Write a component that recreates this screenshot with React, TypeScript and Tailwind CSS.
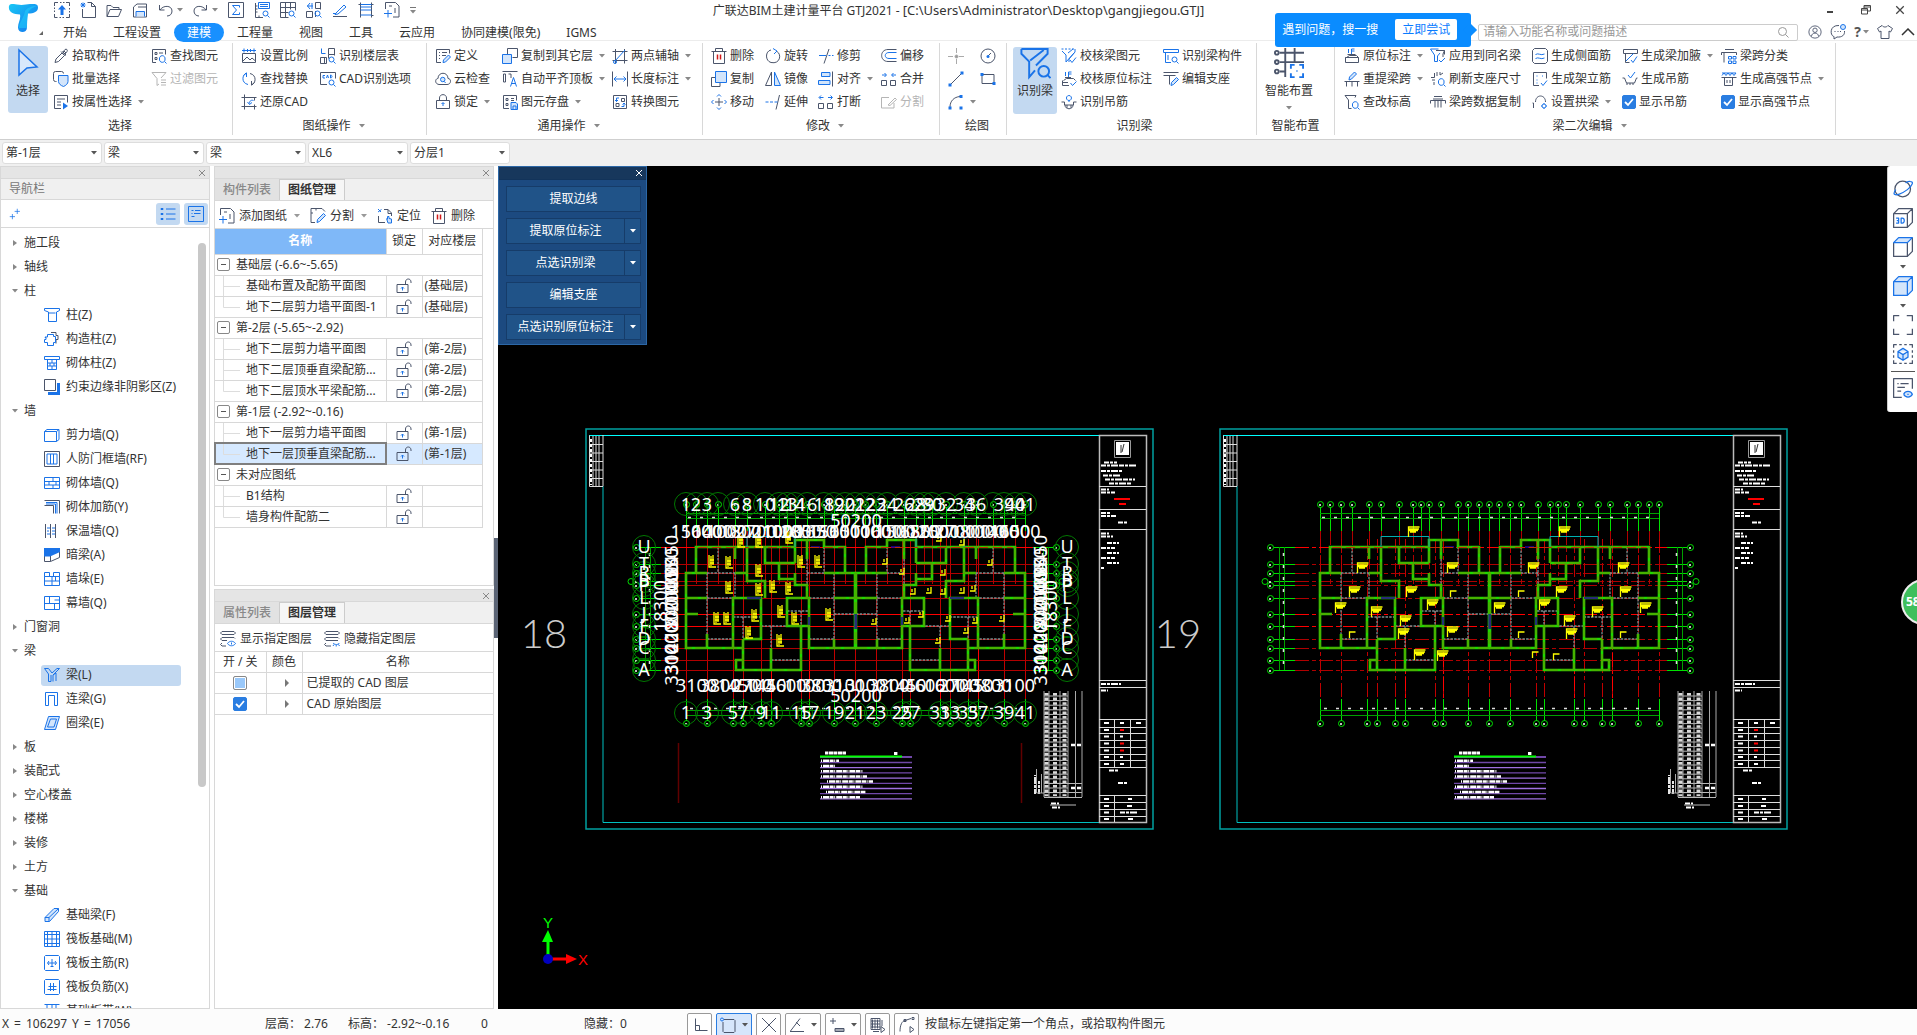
import React from 'react';

type Glyph = { d?: string; b?: string; f?: string; r?: string; s?: string };

// d: dark strokes, b: blue strokes, f: blue strokes with a light fill, r: red strokes, s: solid blue
const GLYPHS: Record<string, Glyph> = {
  up: { d: 'M.5 4V.5H4M6 .5h1.500M9 .5h1.500M12 .5h3.500V4M15.500 6v1.500M15.500 9v1.500M15.500 12v3.500H12M10 15.500H8.500M7 15.500H5.500M3.500 15.500H.5V12M.5 10V8.500M.5 7V5.500', s: 'M8 3l4 4.500H9.500V13h-3V7.500H4z' },
  newdoc: { d: 'M7.500 .5h4l4 4v11H2.500V7M11.500 .5v4h4', b: 'M1 1l4 4M5 1L1 5M3 .5v5M.5 3h5' },
  open: { d: 'M1 14.500V3.500h4l2 2h6v2M1 14.500h11.500l3-7H4z' },
  save: { d: 'M1.500 15V5l3.500-3h9.500v13zM6 5h8', f: 'M4 14.500V9.500h8.500v5' },
  undo: { d: 'M1.500 3v5h5M2 8c3-5 12-5 12 1c0 3-2 5-5 5' },
  redo: { d: 'M13.500 3v5h-5M13 8C10 3 1 3 1 9c0 3 2 5 5 5' },
  sigma: { d: 'M.5 .5h15v15H.5z', b: 'M11.500 5.500v-2h-7L8.500 8l-4 4.500h7v-2' },
  rulerfind: { d: 'M1.500 1v14.500H9M1.500 4h2M1.500 7h2M1.500 10h2M5 15.500v-2', b: 'M4.500 .5h11v6h-11zM6 2.500h8M6 4.500h8M15.500 15.500l-2-2M14 11.500a2.500 2.500 0 1 1-5 0a2.500 2.500 0 1 1 5 0' },
  gridfind: { d: 'M.5 .5h15v8M.5 .5v15h8M.5 5.500h15M.5 10.500h8M5.500 .5v15M10.500 .5v7', b: 'M15.500 15.500l-2-2M14 11.500a2.500 2.500 0 1 1-5 0a2.500 2.500 0 1 1 5 0' },
  gridmark: { d: 'M9.500 .5h5v7M9.500 .5v6h5M.5 9.500h6v6h-6zM9.500 9v6', b: 'M1 4h6M4 1L1.500 4L4 7M6 1v6M15.500 15.500l-2-2M14 11.500a2.500 2.500 0 1 1-5 0a2.500 2.500 0 1 1 5 0' },
  sketch: { d: 'M1 14.500h14', b: 'M4 11l8-8l2 2l-8 7l-3 .5zM1 11.500h3' },
  ladder: { d: 'M2.500 .5v15M13.500 .5v15M.5 2.500h2M13.500 2.500h2M13.500 13.500h2', b: 'M2.500 2.500h11M2.500 5h11M2.500 8h11M2.500 13h11' },
  addpage: { d: 'M1.500 7V.5h10l3.500 3.500v11H9M5 4h3M11 6v5', b: 'M4 8v7.500M0 11.500h8' },
  picker: { d: 'M2 14.500l1-3.500l6-6l2.500 2.500l-6 6zM8 3.500l4.500 4.500M10 4l2-2.500c1.500-1 3 .5 2 2L12 6zM9.500 3.500l3.500 3.500M11 3l2 2' },
  batch: { d: 'M3.500 10.500H2.500a2 2 0 0 1-2-2v-6a2 2 0 0 1 2-2h6a2 2 0 0 1 2 2', f: 'M5.500 4.500h9.500v6c0 2-2 4-4.500 5c-3-1-5-3-5-5z' },
  attr: { d: 'M8 14.500H1.500v-13h13v7M4 5h8M4 8h4M4 11h4', s: 'M10 8.500v7l5-3.500z' },
  find: { d: 'M5 14.500H1.500v-13h13v5M4 4.500h2v2H4zM8 5h4M4 9.500h2v2H4z', b: 'M15.500 15.500l-2-2M14 11a2.800 2.800 0 1 1-5.500 0a2.800 2.800 0 1 1 5.500 0' },
  filter: { d: 'M1 1.500h14L10 7M1 1.500L6 7.500v7l2-1.500M10 9h5M10 11.500h5M10 14h5' },
  ratio: { d: 'M1.500 5.500h13v9h-13zM2 13l4-4l3 3l2-2l3.500 3', b: 'M1 2.500h14M3 .5v4M13 .5v4M6.500 1v3M9.500 1v3' },
  replace: { d: 'M9 2.500c7 1.500 6 10 1.500 11.500M13.500 11.500l-3 2.500v-4', b: 'M7 13.500C0 12 1 3.500 5.500 2M2.500 4.500l3-2.500v4' },
  restore: { d: 'M3.500 .5v15M.5 3.500h15M.5 12.500h15M13.500 3.500v3M13.500 10.500v5', b: 'M12.500 6.500c-3-1-4 1-4 3M6.500 8l2 2.500l2.500-2' },
  floor: { d: 'M8.500 .5h6v7M8.500 .5v6h6M.5 9.500h6v6M.5 9.500v6h6M4.500 9.500v6M8.500 6.500v4', b: 'M1.500 .5v5h4M15.500 15.500l-2-2M14 11.500a2.500 2.500 0 1 1-5 0a2.500 2.500 0 1 1 5 0' },
  cad: { d: 'M7 13.500H.5v-12h15v6', b: 'M5 4.500H3v2.500h2M6.500 7l1-3l1 3M10.500 4v3c2 0 2-3 0-3M15.500 15.500l-2-2M14 11.500a2.500 2.500 0 1 1-5 0a2.500 2.500 0 1 1 5 0' },
  define: { d: 'M6 14.500H1.500v-13h13v4M4 4.500h1M7 4.500h5M4 7.500h1M7 7.500h4M4 10.500h1', f: 'M8 14.500l.500-2.500l5-5l2 2l-5 5z' },
  cloud: { d: 'M4 13.500C-.5 13 0 7.500 3 7.500C3 .5 13 .5 13 7.500c3.500 0 3.500 6-1 6z', f: 'M10 8.500a2.200 2.200 0 1 1-4.500 0a2.200 2.200 0 1 1 4.500 0M10.500 12l-1-1.500' },
  lock: { d: 'M4.500 6.500V4c0-4.500 7-4.500 7 0v2.500M1.500 6.500h13v8h-13z', f: 'M8 12V9M6.500 10L8 8.500L9.500 10' },
  unlock: { d: 'M9.500 6.500V4c0-4 5.500-4 5.500 0v1M1 6.500h11v8H1z', f: 'M6.500 12.500V9M5 10.500L6.500 9L8 10.500' },
  copyto: { d: 'M5.500 6V.5h10v9h-5', f: 'M.5 6.500h9v9h-9z' },
  aligntop: { d: 'M.5 .5h15M3.500 3v8H1.500V3zM6.500 3H9v4', b: 'M8.500 15.500l3-9l3 9M9.500 12.500h4' },
  saveset: { d: 'M7 14.500H1.500v-13h13v5M4 4.500h2v2H4zM9 4.500h3M9 6.500h3M4 9.500h2v2H4z', f: 'M9 8.500h5l1.500 1.500v5.500H9zM11 15v-3h3v3' },
  axis: { d: 'M3.500 1v14.500M12.500 1v14.500M.5 3.500h15M.5 12.500h15', b: 'M3 13L13 2M1.500 14a1.500 1.500 0 1 0 3 0a1.500 1.500 0 1 0-3 0' },
  dim: { d: 'M.5 .5v15M15.500 .5v15', b: 'M2 8h12M4.500 5.500L2 8l2.500 2.500M11.500 5.500L14 8l-2.500 2.500' },
  convert: { d: 'M1.500 1.500h13v13h-13zM9.500 4.500h3v3h-3zM4 9.500h3v3H4z', b: 'M7 4H4.500v3.500M3 6l1.500 1.500L6 6M9.500 12.500h2.500V9M10.500 10.500L12 9l1.500 1.500' },
  trash: { d: 'M.5 3.500h15M4.500 3.500v-3h7v3M2.500 3.500v12h11v-12', r: 'M6.500 6.500v5M9.500 6.500v5' },
  rotate: { d: 'M6 2C0 3 0 13 6 14.500c9 2 11-8 6-11', b: 'M8 .5L12 3L9 6' },
  trim: { d: 'M11 1L6 15.500', b: 'M1 7.500h7M10.500 7.500h2M14 7.500h1.500' },
  offset: { d: 'M15.500 1.500H7c-8.500 0-8.500 12 0 12h8.500', b: 'M15.500 4.500H8c-5 0-5 6 0 6h7.500' },
  copy: { d: 'M4 6.500H.5v9H9v-3.500', f: 'M4.500 .5h11v11h-11z' },
  mirror: { d: 'M6.500 1v13.500H.5z', f: 'M9.500 1v13.500h6z' },
  align: { d: 'M14.500 .5v15', f: 'M3.500 1.500H12v4H3.500zM.5 9.500H12v4H.5z' },
  merge: { d: 'M.5 9.500h5v5h-5zM9.500 9.500h5v5h-5z', b: 'M1 4h4M3.500 2L5.500 4L3.500 6M15 4h-4M12.500 2l-2 2l2 2' },
  move: { d: 'M8 4v8M4 8h8', b: 'M6 2.500L8 .5l2 2M6 13.500l2 2l2-2M2.500 6L.5 8l2 2M13.500 6l2 2l-2 2' },
  extend: { d: 'M14.500 1L11 15.500', b: 'M.5 8h3M5 8h3M9.500 8h3' },
  break: { d: 'M.5 9.500h5v5h-5zM9.500 9.500h5v5h-5z', b: 'M5.500 3.500H1.500M3 1.500L1 3.500l2 2M10 3.500h4M12.500 1.500l2 2l-2 2' },
  split: { d: 'M13 9v5H.5V3.500H8M7 11l7-7l1.500 1.500l-6.500 6z' },
  circle: { d: 'M15 8a7 7 0 1 1-14 0a7 7 0 1 1 14 0M8 8l3-3', s: 'M9.500 8.500a1.500 1.500 0 1 1-3 0a1.500 1.500 0 1 1 3 0' },
  line: { d: 'M3 13L13 3', s: 'M.5 12.500h3v3h-3zM12.500 .5h3v3h-3z' },
  rect: { d: 'M2 3.500h12v9H2z', s: 'M.5 2h3v3h-3zM12.500 11h3v3h-3z' },
  arc: { d: 'M2 13C2 7 6 3 12 2.500', s: 'M.5 12.500h3v3h-3zM11.500 1h3v3h-3zM11.500 12.500h3v3h-3z' },
  beamcheck: { b: 'M.5 1h2M4 1h2M7.500 1h2M11 1h2M14 1v3L8 11v3M1 3l4 4v7M5 14l8-9M7 5l5-4M9 12l2 2.500l4-5' },
  stampcheck: { d: 'M4 6.500h6M2.500 9.500l3-2h7l2 2M1.500 9.500v5H8M1.500 11.500H7', b: 'M7.500 6V1M4.500 1v4M7.500 1h3M7.500 3h3M9.500 12l2 2.500l4-4' },
  hook: { d: 'M.5 8h3v3h9V8h3M4 11c0 5 8 5 8 0M6 14v-3M10 14v-3', b: 'M8 1.500a2.500 2.500 0 1 1-.1 0M8 6.500V8' },
  beamcomp: { b: 'M.5 1.500h15v3H.5zM2.500 4.500v10H8M5 7v5M15.500 15.500l-2-2M14 11.500a2.500 2.500 0 1 1-5 0a2.500 2.500 0 1 1 5 0' },
  editsup: { d: 'M.5 1.500h15M.5 4.500h12M6.500 4.500v9', f: 'M8 14.500l.500-3l5-5l2 2l-5 5z' },
  stamp: { d: 'M3.500 6.500h8M2.500 9.500l3-2h7l2 2v5h-13v-5zM1.500 9.500h13', b: 'M7.500 6V1M4.500 1v4M7.500 1h3M7.500 3h3' },
  respan: { d: 'M.5 10.500h15M2.500 10.500v5M8 10.500v5M13.500 10.500v5', f: 'M5 9l.500-3l5-5l2 2l-5 5z' },
  elev: { d: 'M1 1.500h11l-1 2M1 1.500L4.500 6v8.500h3', b: 'M15.500 15.500l-2-2M14 11a2.800 2.800 0 1 1-5.500 0a2.800 2.800 0 1 1 5.500 0' },
  applysame: { d: 'M6 2.500h8.500L13 6v3M14.500 2.500v4', b: 'M.5 1h8M.5 1l4 6v6.500h3V8L10 5M9 12l2 2l4-4' },
  refresh: { d: 'M1 6.500h3.500V2M7 1v4M10 1v3l3-2M2 9h3M4 14v-3', b: 'M15.500 15.500l-2-2M14 11a2.800 2.800 0 1 1-5.500 0a2.800 2.800 0 1 1 5.500 0' },
  spancopy: { d: 'M4 2.500h8M.5 9.500V6.500h15v3M5 6.500v7M8 6.500v7M11 6.500v7M3 5h10' },
  sidebar: { d: 'M2.500 .5h11l2 2v11l-2 2h-11l-2-2v-11z', b: 'M3.500 6.500c3-2 5 1.500 9-.5M3.500 10.500c3-2 5 1.500 9-.5' },
  stand: { d: 'M7 14.500H1.500v-13h13v6', b: 'M4.500 5h1M10 5h1M4.500 9h1M4.500 12h1M9 12l2 2.500l4-5' },
  arch: { d: 'M1.500 14V9H.5M3.500 8c0-8 10-8 10 0', b: 'M14 12a2 2 0 1 1-4 0a2 2 0 1 1 4 0M12 9v1M12 14v1M9 12h1M14 12h1' },
  haunch: { d: 'M1.500 1.500h14v4h-14zM3.500 5.500v9M3.500 14.500h4', b: 'M11.500 5.500L4 13M9 12l2 2.500l4-6' },
  genhook: { d: 'M.5 7h2l2 5h8l2-5h1M5 12v2M8 12v2M11 12v2', b: 'M6 4l2.500 3L13 1' },
  spanclass: { d: 'M4 1.500h9M.5 7V4.500h15V7M3 4.500v10', b: 'M7.500 8.500h3v2.500h-3zM12 8.500h3v2.500h-3zM7.500 13h3v2.500h-3zM12 13h3v2.500h-3z' },
  node: { d: 'M.5 6.500h15M3.500 6.500v8h8v-8M6 9v3M9 9v3', b: 'M1 2h14M1 4.500L3 2l2 2.500L7 2l2 2.500L11 2l2 2.500L15 2' },
  column: { b: 'M.5 1.500h15v2l-3 1.500v9.500h-8V5L.5 3.500zM4.500 6h7' },
  gzcolumn: { d: 'M7 1.500h5v3h2v4h-2v4', b: 'M3.500 3.500h6v2h2v6h-2v3h-6v-3h-3v-3h1.500v-2H1V6h2.500z' },
  brickcol: { b: 'M.5 1.500h15v3H.5zM3.500 4.500v10h9v-10M3.500 8h9M3.500 11h9M8 4.500V8M6 8v3M10 8v3M8 11v3.500' },
  edgecol: { d: 'M.5 .5h11v11H.5z', s: 'M13 4h3v12H4v-3h9z' },
  wall: { b: 'M.5 4.500h12v10H.5zM.5 4.500l2.500-2h12v10l-2.500 2M12.500 4.500L15 2.500' },
  doorwall: { d: 'M.5 .5h15v15H.5z', b: 'M3 3h10v10H3zM6.500 3v10M9.500 3v10' },
  brick: { b: 'M.5 2.500h15v11H.5zM.5 6.500h15M.5 10h15M9 2.500v4M5 6.500V10M12 6.500V10M9 10v3.500' },
  rebar: { d: 'M.5 1.500h15v13M.5 6.500h9v8', b: 'M2 3.500h11v11M2 5h9.500v9.500' },
  insul: { d: 'M1.500 1v14M6.500 1v14M11.500 1v14', b: 'M3 5h3M3 8h2M3 11h3M8 5h3M8 8h3M8 11h3' },
  hidden: { d: 'M.5 9v5.500h6V9M6.500 14.500L15.500 10.500V5', s: 'M0 1h16v4L6 9.500H0z' },
  pier: { b: 'M.5 1.500h5v4h-5zM9.500 1.500h6v4h-6zM.5 5.500h15v9H.5zM.5 10h15M8 5.500V14.500M11.500 5.500V10' },
  curtain: { b: 'M.5 1.500h15v13H.5zM.5 8.500h15M5.500 1.500v7M10.500 8.500v6M10.500 5h5' },
  beam: { b: 'M.5 1.500h4L8 6L13 1.500h2.500L9 8v6.500M.5 1.500L4.500 7v7.500H7V8M9 8l3-2v8' },
  linkbeam: { b: 'M1.500 14.500V1.500h12v13h-3v-10h-6v10z' },
  ringbeam: { f: 'M4.500 1.500h11l-4 13H.5zM6.500 4h6l-2.500 8H3.500z' },
  footbeam: { f: 'M1 14.500v-4L10 1.500h4.500v3L5.500 14.500zM1 10.500h4v4M5 10.500l9.500-9' },
  raft: { b: 'M.5 .5h15v15H.5zM3.500 .5v15M8 .5v15M12.500 .5v15M.5 3.500h15M.5 8h15M.5 12.500h15' },
  mainbar: { b: 'M1.500 .5h13l1 1v13l-1 1h-13l-1-1v-13zM4 8h8M8 4v7M5 6L3.500 8L5 10M11 6l1.500 2L11 10M6.500 11.500h3' },
  negbar: { b: 'M1.500 .5h13l1 1v13l-1 1h-13l-1-1v-13zM3.500 10.500h9M4.500 7.500h8M6.500 4v8M9.500 4v8' },
  band: { b: 'M.5 1.500h15M3 1.500v4M8 1.500v4M12 1.500v4M.5 5.500h15' },
  sheetcut: { d: 'M5 14.500H1V.5h11l3 3M1 5h2M6 .5v2', f: 'M7 14.500l.500-3l6-6l2 2l-6 6z' },
  locate: { d: 'M1.500 8v6.500H8M7 1.500h4l3.500 3.500v3M11 1.500v4h3.500', b: 'M1 1l3 3M4.500 1.500L1 4', f: 'M9.500 10.500l1.500 4.500h3.500v-4l-2.500-.5v-2h-1.500v3' },
  layerson: { d: 'M2 .5h12l1.500 1.500L14 3.500H2L.5 2zM2 6.500h12l1 1M2 6.500L.5 8L2 9.500h5M2 12L.5 13.500L2 15h4', b: 'M7.500 12.500c2-3 6-3 8 0c-2 3-6 3-8 0M11.500 11.500v2' },
  layersoff: { d: 'M2 .5h12l1.500 1.500L14 3.500H2L.5 2zM2 6.500h12l1 1M2 6.500L.5 8L2 9.500h12M2 12L.5 13.500L2 15h5', b: 'M9 12c2 2 5 2 6.500 0M10 13.500l-1 1.500M12.200 14v1.500M14.500 13.500l1 1.500' },
  list: { b: 'M1 2.500h2v1H1zM6 3h9.500M1 7.500h2v1H1zM6 8h9.500M1 12.500h2v1H1zM6 13h9.500' },
  notes: { b: 'M.5 .5h15v15H.5zM3.500 4.500h2M7 4.500h5.500M3.500 7.500h1M6 7.500h6.500M3.500 10.500h3' },
  plus2: { b: 'M11 1v7M7.500 4.500h7M4.500 8v7M1 11.500h7' },
  orbit: { d: 'M14 8a6.200 6.200 0 1 1-12.500 0a6.200 6.200 0 1 1 12.500 0', b: 'M14 2c2.500 0 2 3-2.500 6.500S1 14 .8 11.500c0-1 .5-2 1.500-3M14 2c-2-.2-3 .5-4 1' },
  cube3d: { d: 'M.5 4.500h11v11H.5zM.5 4.500l4-4h11v11l-4 4M11.500 4.500l4-4', b: 'M2.500 8h2v4h-2M3 10h1.500M6.500 8v4h1c2 0 2-4 0-4z' },
  cubetop: { d: 'M.5 4.500v11h11v-11M15.500 .5v11l-4 4', f: 'M.5 4.500l4-4h11l-4 4z' },
  cubefull: { f: 'M.5 4.500l4-4h11v11l-4 4H.5zM.5 4.500h11v11M11.500 4.500l4-4' },
  corners: { d: 'M.5 5V.5H5M11 .5h4.500V5M15.500 11v4.500H11M5 15.500H.5V11' },
  selcube: { d: 'M.5 3V.5H3M5 .5h2M9 .5h2M13 .5h2.500V3M15.500 5v2M15.500 9v2M15.500 13v2.500H13M11 15.500H9M7 15.500H5M3 15.500H.5V13M.5 11V9M.5 7V5', f: 'M8 3.500l4 2.500v4.500L8 13l-4-2.500V6zM4 6l4 2.500L12 6M8 8.500V13' },
  listeye: { d: 'M7 15.500H.5V.5h15v8M3.500 4.500h1M6 4.500h6.500M3.500 7.500h6M3.500 10.500h3', f: 'M8.500 13c1.500-3 5.500-3 7 0c-1.500 3-5.500 3-7 0M12 12.500v1' },
  ortho: { d: 'M3.500 1.500v12h12M3.500 8.500h4v5' },
  snaprect: { d: 'M4 2.500h10l1 1v11l-1 1H4l-1-1V5', b: 'M3.500 2.500a1.500 1.500 0 1 1-3 0a1.500 1.500 0 1 1 3 0' },
  cross: { d: 'M1 1l14 14M15 1L1 15' },
  angle: { d: 'M1 14.500h14M1.500 14L11 1.500M7 5l4 4' },
  plusbox: { d: 'M4 1v6M1 4h6M6 11.500h9v3H6zM6 13h9' },
  layersel: { d: 'M1 1.500h9v11H1zM1 4h9M1 7h9M1 10h9M2.500 2.500v9M5 2.500v9M7.500 2.500v9M12 3v6M3 14.500h6M11 9.500v6l4-3z' },
  arcsel: { d: 'M1 14.500C1 8 3 4 6 3.500L12 1.500M5 2.500h2v2H5zM13 .5h2v2h-2zM11 9.500v6l4-3z' },
  user: { d: 'M15 8a7 7 0 1 1-14 0a7 7 0 1 1 14 0M10.500 6a2.500 2.500 0 1 1-5 0a2.500 2.500 0 1 1 5 0M4 13c0-5 8-5 8 0' },
  chat: { d: 'M9 1.500C-1 1 0 12 4 12.500V15l3-2c5 .5 8-2 7.500-6M4.500 7.500h1M7.500 7.500h1M10 7.500h1', f: 'M15.500 3a2.500 2.500 0 1 1-5 0a2.500 2.500 0 1 1 5 0' },
  shirt: { d: 'M5 1.500L.5 4.500L2.500 8L4 7v7.500h8V7l1.500 1l2-3.500L11 1.500c-1.500 2-4.500 2-6 0z' },
};

const Icon: React.FC<{ name: string; className?: string; muted?: boolean }> = ({ name, className = 'h-4 w-4', muted }) => {
  const g = GLYPHS[name];
  return (
    <svg viewBox="0 0 16 16" className={`shrink-0 ${className}`} fill="none" strokeWidth="1" strokeLinejoin="round" aria-hidden="true">
      {g.d && <path d={g.d} stroke={muted ? '#b5b5b5' : '#4b556b'} />}
      {g.f && <path d={g.f} stroke="#1a73e8" fill="#d3e5fb" />}
      {g.b && <path d={g.b} stroke="#1a73e8" />}
      {g.s && <path d={g.s} fill="#1a73e8" />}
      {g.r && <path d={g.r} stroke="#d01818" strokeWidth="1.500" />}
    </svg>
  );
};

const Caret: React.FC<{ className?: string }> = ({ className = 'text-[#888]' }) => (
  <svg viewBox="0 0 6 4" className={`h-1 w-1.5 shrink-0 ${className}`} aria-hidden="true">
    <path d="M0 0h6L3 3.500z" fill="currentColor" />
  </svg>
);

const Close: React.FC<{ className: string }> = ({ className }) => (
  <svg viewBox="0 0 8 8" className={className} stroke="currentColor" aria-hidden="true">
    <path d="M1 1l6 6M7 1L1 7" />
  </svg>
);

interface Tool {
  icon: string;
  text?: string;
  menu?: boolean;
  muted?: boolean;
  check?: boolean;
}

const t = (icon: string, text?: string, menu = false, muted = false): Tool => ({ icon, text, menu, muted });

const Check: React.FC<{ text?: string; label?: string }> = ({ text, label }) => (
  <label className="flex items-center gap-[3px] whitespace-nowrap">
    <span className="grid h-3.5 w-3.5 place-items-center">
      <input
        type="checkbox"
        defaultChecked
        aria-label={label}
        className="col-start-1 row-start-1 h-3.5 w-3.5 appearance-none rounded-[2px] border border-[#888] bg-white checked:border-[#2a7de1] checked:bg-[#2a7de1]"
      />
      <svg viewBox="0 0 14 14" className="pointer-events-none col-start-1 row-start-1 h-3.5 w-3.5" fill="none" stroke="#fff" strokeWidth="1.800">
        <path d="M3 7l3 3l5-6" />
      </svg>
    </span>
    {text}
  </label>
);

const ToolColumn: React.FC<{ tools: Tool[]; className?: string }> = ({ tools, className = '' }) => (
  <div className={`flex shrink-0 flex-col ${className}`}>
    {tools.map((tool, i) => (
      <div key={i} className="flex h-[23px] items-center">
        {tool.check ? (
          <Check text={tool.text} />
        ) : (
          <button
            type="button"
            aria-label={tool.text || tool.icon}
            disabled={tool.muted}
            className={`flex items-center gap-[3px] whitespace-nowrap ${tool.muted ? 'text-[#b5b5b5]' : ''}`}
          >
            <Icon name={tool.icon} muted={tool.muted} />
            {tool.text}
            {tool.menu && <Caret className="ml-[3px] text-[#888]" />}
          </button>
        )}
      </div>
    ))}
  </div>
);

const Group: React.FC<{ label: string; menu?: boolean; className: string; children: React.ReactNode }> = ({
  label,
  menu,
  className,
  children,
}) => (
  <section className={`mt-0.5 flex h-[92px] shrink-0 flex-col border-r border-[#d8d8d8] ${className}`}>
    <div className="flex h-[73px] pt-px">{children}</div>
    <div className="flex h-[19px] items-center justify-center gap-2">
      {label}
      {menu && <Caret />}
    </div>
  </section>
);

const QUICK = [t('up'), t('newdoc'), t('open'), t('save'), t('undo', '', true), t('redo', '', true), t('sigma'), t('rulerfind'), t('gridfind'), t('gridmark'), t('sketch'), t('ladder'), t('addpage')];

const TABS = ['开始', '工程设置', '建模', '工程量', '视图', '工具', '云应用', '协同建模(限免)', 'IGMS'];

const Logo: React.FC = () => (
  <svg viewBox="0 0 36 34" className="absolute left-2 top-1 h-[34px] w-9" aria-hidden="true">
    <defs>
      <linearGradient id="logo" x1="0" y1="0" x2="1" y2="1">
        <stop offset="0" stopColor="#19c8f5" />
        <stop offset="1" stopColor="#1272ee" />
      </linearGradient>
    </defs>
    <path d="M1 2c1-3 5-2 8-1.500c5 1 9 0 13-.5c5-.5 8 0 8 3.500c0 4-4 6-10 6c-1 5-1 10-1 14c0 6-9 6-9 0c0-5 3-8 2-13C5 10 0 8 1 2z" fill="url(#logo)" />
    <path d="M11 24c0-6 5-10 6-17c2-3 6-5 12-5c-6 2-9 5-9 8c-1 5-1 10-1 14" fill="#22d3fb" opacity=".5" />
    <path d="M31 31l4-4v4z" fill="#666" />
  </svg>
);

const Header: React.FC = () => (
  <header className="relative shrink-0 border-b border-[#ececec] bg-white">
    <Logo />
    <div className="grid h-5 grid-cols-[minmax(0,1fr)_auto_minmax(0,1fr)] items-center">
      <div className="flex items-center gap-2.5 pl-[54px]">
        {QUICK.map((q) => (
          <button key={q.icon} type="button" aria-label={q.icon} className="flex items-center gap-[3px]">
            <Icon name={q.icon} />
            {q.menu && <Caret />}
          </button>
        ))}
        <button type="button" aria-label="more" className="border-t border-[#777] pt-0.5">
          <Caret />
        </button>
      </div>
      <h1 className="whitespace-nowrap">
        广联达BIM土建计量平台 GTJ2021 - <span className="text-[13px]">[C:\Users\Administrator\Desktop\gangjiegou.GTJ]</span>
      </h1>
      <div className="flex items-center justify-end gap-6 pr-3 text-[#444]">
        <button type="button" aria-label="minimize" className="mr-1 mt-1 h-0.5 w-1.5 bg-[#444]" />
        <button type="button" aria-label="restore">
          <svg viewBox="0 0 10 10" className="h-2.5 w-2.5" fill="none" stroke="currentColor">
            <path d="M.5 3.500h6v5.500h-6zM.5 5h6M3 3V.500h6.500v5.500H7M3 2h6" />
          </svg>
        </button>
        <button type="button" aria-label="close">
          <Close className="h-2.5 w-2.5" />
        </button>
      </div>
    </div>
    <div className="flex h-5 items-center justify-between">
      <nav className="mt-1 flex pl-[50px]">
        {TABS.map((tab) => (
          <button
            key={tab}
            type="button"
            className={`h-[19px] whitespace-nowrap rounded-full px-[13px] leading-[19px] ${tab === '建模' ? 'bg-[#1890ff] text-white' : ''}`}
          >
            {tab}
          </button>
        ))}
      </nav>
      <div className="flex items-center gap-2 pt-1">
        <div className="relative flex h-[17px] w-80 items-center rounded-[2px] border border-[#ccc] px-1">
          <input aria-label="搜索" placeholder="请输入功能名称或问题描述" className="min-w-0 flex-1 bg-transparent outline-none placeholder:text-[#999]" />
          <svg viewBox="0 0 12 12" className="mr-1 h-3 w-3" fill="none" stroke="#999">
            <path d="M9.500 5.500a4 4 0 1 1-8 0a4 4 0 1 1 8 0M8.500 8.500l3 3" />
          </svg>
          <div className="absolute -top-3 right-full z-20 mr-2 flex h-[34px] w-[196px] items-center justify-between rounded-[3px] bg-[#0a8cff] pl-[7px] pr-3.5 text-white">
            遇到问题，搜一搜
            <button type="button" className="h-[21px] rounded-[2px] bg-white px-[7px] text-[#0a7cff]">
              立即尝试
            </button>
            <span className="absolute -right-1 top-3 h-2.5 w-2.5 rotate-45 bg-[#0a8cff]" />
          </div>
        </div>
        <div className="flex items-center gap-2 pl-0.5">
          <button type="button" aria-label="user"><Icon name="user" className="h-3.5 w-3.5" /></button>
          <button type="button" aria-label="chat"><Icon name="chat" /></button>
          <button type="button" className="flex items-center gap-0.5 text-[14px] font-bold text-[#555]">?<Caret /></button>
          <button type="button" aria-label="skin"><Icon name="shirt" /></button>
          <button type="button" aria-label="collapse" className="pr-0.5">
            <svg viewBox="0 0 14 8" className="h-2 w-3.5" fill="none" stroke="#333" strokeWidth="1.500"><path d="M1 7l6-6l6 6" /></svg>
          </button>
        </div>
      </div>
    </div>
  </header>
);

const Ribbon: React.FC = () => (
  <div className="flex shrink-0 overflow-hidden border-b border-[#cfcfcf] bg-white pb-1">
    <Group label="选择" className="w-[233px] pl-2">
      <button type="button" className="mr-[5px] mt-0.5 flex h-[67px] w-10 shrink-0 flex-col items-center rounded-[3px] bg-[#c3d9f1] pt-0.5">
        <svg viewBox="0 0 24 30" className="h-[30px] w-6" fill="#d8e8fb" stroke="#1a73e8" strokeWidth="1.500"><path d="M3 2l18 17l-10 1l-8 7z" /></svg>
        <span className="pt-1">选择</span>
      </button>
      <ToolColumn className="w-[98px]" tools={[t('picker', '拾取构件'), t('batch', '批量选择'), t('attr', '按属性选择', true)]} />
      <ToolColumn tools={[t('find', '查找图元'), t('filter', '过滤图元', false, true)]} />
    </Group>
    <Group label="图纸操作" menu className="w-[194px] pl-2">
      <ToolColumn className="w-[79px]" tools={[t('ratio', '设置比例'), t('replace', '查找替换'), t('restore', '还原CAD')]} />
      <ToolColumn tools={[t('floor', '识别楼层表'), t('cad', 'CAD识别选项')]} />
    </Group>
    <Group label="通用操作" menu className="w-[276px] pl-2">
      <ToolColumn className="w-[67px]" tools={[t('define', '定义'), t('cloud', '云检查'), t('lock', '锁定', true)]} />
      <ToolColumn className="w-[110px]" tools={[t('copyto', '复制到其它层', true), t('aligntop', '自动平齐顶板', true), t('saveset', '图元存盘', true)]} />
      <ToolColumn tools={[t('axis', '两点辅轴', true), t('dim', '长度标注', true), t('convert', '转换图元')]} />
    </Group>
    <Group label="修改" menu className="w-[237px] pl-2">
      <ToolColumn className="w-[54px]" tools={[t('trash', '删除'), t('copy', '复制'), t('move', '移动')]} />
      <ToolColumn className="w-[53px]" tools={[t('rotate', '旋转'), t('mirror', '镜像'), t('extend', '延伸')]} />
      <ToolColumn className="w-[63px]" tools={[t('trim', '修剪'), t('align', '对齐', true), t('break', '打断')]} />
      <ToolColumn tools={[t('offset', '偏移'), t('merge', '合并'), t('split', '分割', false, true)]} />
    </Group>
    <Group label="绘图" className="w-[67px] pl-2">
      <div className="w-8">
        <div className="grid h-[23px] w-4 place-items-center">
          <button type="button" aria-label="point">
            <svg viewBox="0 0 16 16" className="h-4 w-4" fill="#999" stroke="#aaa"><path d="M8.500 0v5M8.500 11v5M0 8.500h5M11 8.500h5" /><circle cx="8.500" cy="8.500" r="1.500" /></svg>
          </button>
        </div>
        <ToolColumn tools={[t('line'), t('arc', '', true)]} />
      </div>
      <ToolColumn tools={[t('circle'), t('rect')]} />
    </Group>
    <Group label="识别梁" className="w-[250px] pl-1.5">
      <button type="button" className="mr-1 mt-[3px] flex h-[67px] w-11 shrink-0 flex-col items-center rounded-[3px] bg-[#c3d9f1]">
        <svg viewBox="0 0 32 34" className="h-[33px] w-8" fill="none" stroke="#1a73e8" strokeWidth="2"><path d="M2 2h27v5L17 19M2 2v5l8 8v16l6-7M11 14L25 3" /><circle cx="25" cy="25" r="5.500" /><path d="M29 29l3 3" /></svg>
        <span className="pt-0.5">识别梁</span>
      </button>
      <ToolColumn className="w-[102px]" tools={[t('beamcheck', '校核梁图元'), t('stampcheck', '校核原位标注'), t('hook', '识别吊筋')]} />
      <ToolColumn tools={[t('beamcomp', '识别梁构件'), t('editsup', '编辑支座')]} />
    </Group>
    <Group label="智能布置" className="w-[78px]">
      <button type="button" className="flex w-16 flex-col items-center pt-1">
        <svg viewBox="0 0 32 32" className="h-[30px] w-[30px]" fill="none" stroke="#4b556b" strokeWidth="2"><path d="M6 5h26M6 15h26M6 25h7M12 0v31M22 0v14" /><circle cx="3" cy="5" r="2" /><circle cx="3" cy="15" r="2" /><circle cx="3" cy="25" r="2" /><path d="M22 18h-4v4M27 18h4v4M31 27v4h-4M22 31h-4v-4M24 24.500h1" stroke="#1a73e8" /></svg>
        <span className="pb-1.5 pt-1">智能布置</span>
        <Caret />
      </button>
    </Group>
    <Group label="梁二次编辑" menu className="w-[501px] pl-[9px]">
      <ToolColumn className="w-[86px]" tools={[t('stamp', '原位标注', true), t('respan', '重提梁跨', true), t('elev', '查改标高')]} />
      <ToolColumn className="w-[102px]" tools={[t('applysame', '应用到同名梁'), t('refresh', '刷新支座尺寸'), t('spancopy', '梁跨数据复制')]} />
      <ToolColumn className="w-[90px]" tools={[t('sidebar', '生成侧面筋'), t('stand', '生成架立筋'), t('arch', '设置拱梁', true)]} />
      <ToolColumn className="w-[99px]" tools={[t('haunch', '生成梁加腋', true), t('genhook', '生成吊筋'), { icon: '', text: '显示吊筋', check: true }]} />
      <ToolColumn tools={[t('spanclass', '梁跨分类'), t('node', '生成高强节点', true), { icon: '', text: '显示高强节点', check: true }]} />
    </Group>
  </div>
);

const FILTERS = [
  ['楼层', '第-1层'],
  ['构件大类', '梁'],
  ['构件类型', '梁'],
  ['构件', 'XL6'],
  ['分层', '分层1'],
];

const Filters: React.FC = () => (
  <div className="flex h-[26px] shrink-0 items-center gap-0.5 bg-[#f0f0f0] pl-0.5">
    {FILTERS.map(([label, value]) => (
      <div key={label} className="relative flex w-[100px] items-center">
        <select aria-label={label} className="h-[22px] w-full appearance-none rounded-[3px] border border-[#ddd] bg-white pl-[3px] outline-none">
          <option>{value}</option>
        </select>
        <Caret className="pointer-events-none absolute right-[5px] text-[#555]" />
      </div>
    ))}
  </div>
);

interface TreeGroup {
  name: string;
  items?: [string, string][];
}

const TREE: TreeGroup[] = [
  { name: '施工段' },
  { name: '轴线' },
  { name: '柱', items: [['column', '柱(Z)'], ['gzcolumn', '构造柱(Z)'], ['brickcol', '砌体柱(Z)'], ['edgecol', '约束边缘非阴影区(Z)']] },
  {
    name: '墙',
    items: [['wall', '剪力墙(Q)'], ['doorwall', '人防门框墙(RF)'], ['brick', '砌体墙(Q)'], ['rebar', '砌体加筋(Y)'], ['insul', '保温墙(Q)'], ['hidden', '暗梁(A)'], ['pier', '墙垛(E)'], ['curtain', '幕墙(Q)']],
  },
  { name: '门窗洞' },
  { name: '梁', items: [['beam', '梁(L)'], ['linkbeam', '连梁(G)'], ['ringbeam', '圈梁(E)']] },
  { name: '板' },
  { name: '装配式' },
  { name: '空心楼盖' },
  { name: '楼梯' },
  { name: '装修' },
  { name: '土方' },
  { name: '基础', items: [['footbeam', '基础梁(F)'], ['raft', '筏板基础(M)'], ['mainbar', '筏板主筋(R)'], ['negbar', '筏板负筋(X)'], ['band', '基础板带(W)']] },
];

const PanelBar: React.FC = () => (
  <div className="flex h-3 shrink-0 items-center justify-end border-b border-[#d8d8d8] bg-[#e5e5e5] pr-[3px]">
    <button type="button" aria-label="close panel">
      <Close className="h-2 w-2 text-[#888]" />
    </button>
  </div>
);

const NavPanel: React.FC = () => (
  <aside className="flex w-[210px] shrink-0 flex-col border border-[#d8d8d8] bg-white">
    <PanelBar />
    <div className="h-[21px] shrink-0 border-b border-[#d8d8d8] bg-[#f0f0f0] pl-2 leading-[20px] text-[#777]">导航栏</div>
    <div className="flex h-7 shrink-0 items-center gap-1 border-b border-[#d8d8d8] pl-2 pr-px">
      <button type="button" aria-label="add" className="mr-auto"><Icon name="plus2" className="h-3 w-3" /></button>
      <button type="button" aria-label="list view" className="grid h-[22px] w-6 place-items-center rounded-[3px] bg-[#c3d9f1]"><Icon name="list" /></button>
      <button type="button" aria-label="detail view" className="grid h-[22px] w-6 place-items-center rounded-[3px] bg-[#c3d9f1]"><Icon name="notes" /></button>
    </div>
    <div className="flex min-h-0 flex-1 overflow-hidden pt-[3px]">
      <ul className="min-w-0 flex-1">
        {TREE.map((group) => (
          <li key={group.name}>
            <button type="button" className="flex h-6 w-full items-center gap-[5px] pl-2.5">
              <svg viewBox="0 0 8 8" className="h-2 w-2 shrink-0" fill="#888"><path d={group.items ? 'M1 2h6L4 5.500z' : 'M2 1v6l4-3z'} /></svg>
              {group.name}
            </button>
            {group.items?.map(([icon, name]) => (
              <div key={name} className="flex h-6 items-center pl-10">
                <button type="button" className={`flex h-[21px] w-[140px] items-center gap-1.5 whitespace-nowrap rounded-[3px] pl-[3px] ${icon === 'beam' ? 'bg-[#c3d9f1]' : ''}`}>
                  <Icon name={icon} />
                  {name}
                </button>
              </div>
            ))}
          </li>
        ))}
      </ul>
      <div className="mr-[3px] mt-3 h-[70%] w-2 shrink-0 rounded-full bg-[#c8c8c8]" />
    </div>
  </aside>
);

const PanelTabs: React.FC<{ tabs: [string, string] }> = ({ tabs }) => (
  <div className="flex h-[22px] shrink-0 border-b border-[#d8d8d8] bg-[#f0f0f0] font-medium">
    <button type="button" className="w-[65px] border-r border-[#ccc] bg-[#e2e2e2] text-[#888]">{tabs[0]}</button>
    <button type="button" className="w-[65px] border-r border-t border-[#ccc] bg-[#f6f6f6] font-bold text-[#333]">{tabs[1]}</button>
  </div>
);

interface SheetGroup {
  title: string;
  rows: string[];
  floor?: string;
}

const SHEETS: SheetGroup[] = [
  { title: '基础层 (-6.6~-5.65)', rows: ['基础布置及配筋平面图', '地下二层剪力墙平面图-1'], floor: '(基础层)' },
  { title: '第-2层 (-5.65~-2.92)', rows: ['地下二层剪力墙平面图', '地下二层顶垂直梁配筋...', '地下二层顶水平梁配筋...'], floor: '(第-2层)' },
  { title: '第-1层 (-2.92~-0.16)', rows: ['地下一层剪力墙平面图', '地下一层顶垂直梁配筋...'], floor: '(第-1层)' },
  { title: '未对应图纸', rows: ['B1结构', '墙身构件配筋二'] },
];

const SheetPanel: React.FC = () => (
  <section className="flex h-[420px] shrink-0 flex-col border border-[#d8d8d8] bg-white">
    <PanelBar />
    <PanelTabs tabs={['构件列表', '图纸管理']} />
    <div className="flex h-7 shrink-0 items-center gap-2.5 border-b border-[#d8d8d8] pl-1 pt-0.5">
      {[t('addpage', '添加图纸', true), t('sheetcut', '分割', true), t('locate', '定位'), t('trash', '删除')].map((tool) => (
        <button key={tool.icon} type="button" className="flex items-center gap-1 whitespace-nowrap">
          <Icon name={tool.icon} />
          {tool.text}
          {tool.menu && <Caret className="ml-[3px] text-[#999]" />}
        </button>
      ))}
    </div>
    <table className="w-[268px] table-fixed border-collapse">
      <colgroup>
        <col className="w-[171px]" />
        <col className="w-9" />
        <col />
      </colgroup>
      <thead>
        <tr className="h-[25px] border-b border-[#d8d8d8]">
          <th className="border-r border-[#d8d8d8] bg-[#7fb8f8] font-bold text-white">名称</th>
          <th className="border-r border-[#d8d8d8] font-normal">锁定</th>
          <th className="border-r border-[#d8d8d8] font-normal">对应楼层</th>
        </tr>
      </thead>
      <tbody>
        {SHEETS.map((group) => (
          <React.Fragment key={group.title}>
            <tr className="h-[21px] border-b border-[#d8d8d8]">
              <td colSpan={3} className="border-r border-[#d8d8d8] p-0 pl-0.5">
                <button type="button" className="flex items-center gap-1.5">
                  <span className="grid h-[13px] w-[13px] place-items-center rounded-[2px] border border-[#888]">
                    <span className="h-px w-[5px] bg-[#555]" />
                  </span>
                  {group.title}
                </button>
              </td>
            </tr>
            {group.rows.map((row, i) => {
              const active = row === '地下一层顶垂直梁配筋...';
              return (
                <tr key={row} className={`h-[21px] border-b border-[#d8d8d8] ${active ? 'bg-[#d6e9ff]' : ''}`}>
                  <td className={`border-r border-[#d8d8d8] p-0 pl-2 ${active ? 'outline-2 -outline-offset-1 outline-[#7f7f7f]' : ''}`}>
                    <div className="flex items-center gap-1.5 whitespace-nowrap">
                      <svg viewBox="0 0 17 20" className="h-5 w-[17px] shrink-0" fill="none" stroke="#ddd">
                        <path d={i === group.rows.length - 1 ? 'M.5 0v10.500H17' : 'M.5 0v20M.5 10.500H17'} />
                      </svg>
                      {row}
                    </div>
                  </td>
                  <td className="border-r border-[#d8d8d8] p-0">
                    <button type="button" aria-label="锁定" className="mx-auto block"><Icon name="unlock" /></button>
                  </td>
                  <td className="border-r border-[#d8d8d8] p-0 pl-0.5">{group.floor}</td>
                </tr>
              );
            })}
          </React.Fragment>
        ))}
      </tbody>
    </table>
  </section>
);

const LayerPanel: React.FC = () => (
  <section className="flex min-h-0 flex-1 flex-col border border-[#d8d8d8] bg-white">
    <PanelBar />
    <PanelTabs tabs={['属性列表', '图层管理']} />
    <div className="flex h-[27px] shrink-0 items-center gap-3 pl-[5px] pt-0.5">
      <button type="button" className="flex items-center gap-1"><Icon name="layerson" />显示指定图层</button>
      <button type="button" className="flex items-center gap-1"><Icon name="layersoff" />隐藏指定图层</button>
    </div>
    <table className="w-full table-fixed border-collapse border-y border-[#d8d8d8]">
      <colgroup>
        <col className="w-[51px]" />
        <col className="w-9" />
        <col />
      </colgroup>
      <thead>
        <tr className="h-[21px] border-b border-[#d8d8d8]">
          <th className="border-r border-[#d8d8d8] font-normal">开 / 关</th>
          <th className="border-r border-[#d8d8d8] font-normal">颜色</th>
          <th className="font-normal">名称</th>
        </tr>
      </thead>
      <tbody>
        {['已提取的 CAD 图层', 'CAD 原始图层'].map((layer, i) => (
          <tr key={layer} className="h-[21px] border-b border-[#d8d8d8]">
            <td className="border-r border-[#d8d8d8] p-0">
              <div className="flex justify-center">
                {i === 0 ? (
                  <input type="checkbox" aria-label={layer} className="h-3.5 w-3.5 appearance-none rounded-[2px] border border-[#888] bg-[#99c8fa] shadow-[inset_0_0_0_1px_#fff]" />
                ) : (
                  <Check label={layer} />
                )}
              </div>
            </td>
            <td className="border-r border-[#d8d8d8] p-0 pl-1.5">
              <svg viewBox="0 0 8 8" className="mx-auto h-2 w-2" fill="#777"><path d="M2 0v8l4-4z" /></svg>
            </td>
            <td className="p-0 pl-1">{layer}</td>
          </tr>
        ))}
      </tbody>
    </table>
  </section>
);

// axis positions of the floor plan, in sheet units
const TOP_X = [100, 110, 121, 132, 149, 161, 179, 193, 201, 209, 221, 238, 248, 259, 269, 279, 290, 301, 318, 330, 338, 346, 360, 378, 390, 407, 418, 429, 439];
const BOTTOM_X = [100, 121, 147, 157, 175, 185, 215, 223, 248, 269, 290, 316, 324, 354, 364, 382, 392, 418, 439];
const SIDE_Y = [118, 135, 144, 152, 156, 169, 185, 197, 210, 219, 231, 241];
const TOP_NO = '1 2 3 _ 6 8 10 12 13 14 16 18 19 20 21 22 23 24 26 28 29 30 32 34 36 _ 39 40 41'.split(' ');
const BOTTOM_NO = '1 3 5 7 9 11 15 17 19 21 23 25 27 31 33 35 37 39 41'.split(' ');
const SIDE_NO = 'U T R B P L J F D C _ A'.split(' ');
const TOP_DIM = '1500 1600 1400 1000 1800 2700 2100 1000 1200 1850 1650 1500 1600 1500 1100 1100 1600 1500 1650 1850 1200 1500 2700 1800 1000 1400 1600 1500'.split(' ');
const BOTTOM_DIM = '3100 3800 1450 2700 1450 4600 1100 3800 3100 3100 3800 1450 4600 1600 2700 1450 3800 3100'.split(' ');
const SIDE_DIM = '2450 1550 1300 1400 2000 2400 1800 2200 1400 3100 3300'.split(' ');

const WALLS =
  'M110 144V118H209M209 134V111H238V118H259V144M121 144H100V219H157M149 118V130M149 144H161V152H179V169M161 118V152M179 118V134H209M193 134V150H209M209 144V156H221V169M221 111V130M238 144H269V219H223V169H201V197H223M248 210V219M248 169H269M121 205V219M147 219V169H175V210H157M157 210V241H215V197M157 231H150V241H157M185 219V241M100 169H121M100 185H112';
const SLABS =
  'M132 118V144M121 144H149M121 144V210M149 144V169M221 144H238V118M248 144V219M223 169H248M248 185H269M121 169H147M121 210H147M223 210H248M185 231H215M147 188H175M157 188V210M175 197H201M185 197V219M201 182H223M215 182V197M221 130V156M179 152V169';

const NOTES_FULL = [[188, 98], [339, 98], [137, 134], [227, 134], [308, 134], [398, 134], [129, 158], [186, 158], [336, 158], [400, 158], [115, 174], [151, 178], [207, 171], [274, 174], [319, 171], [372, 178], [420, 174], [180, 187], [344, 187], [178, 200], [227, 198], [346, 200], [194, 221], [217, 222]];
const NOTES_FULL_SMALL = [[230, 162], [298, 162], [129, 203], [298, 203], [400, 203], [333, 225], [312, 223]];
const NOTES_TALL = [[122, 126], [139, 127], [211, 126], [228, 126], [169, 135], [151, 106], [169, 106], [139, 152], [169, 154], [183, 151], [199, 153], [127, 183], [137, 183], [165, 180], [191, 176], [205, 183], [239, 179], [159, 197], [190, 205], [199, 102]];
const NOTES_TALL_SMALL = [[296, 129], [313, 139], [350, 106], [373, 110], [401, 130], [354, 140], [324, 159], [340, 158], [354, 159], [373, 158], [384, 156], [285, 189], [318, 188], [332, 182], [359, 186], [386, 188], [413, 186], [377, 198], [349, 208]];

const RULES = [57, 80, 100, 251, 258, 290, 298, 304, 311, 318, 325, 331, 338, 366, 373, 380, 387];
const LEGEND: [number, number][] = [[0, 18], [0, 14], [0, 42], [0, 46], [6, 46], [0, 42], [5, 40], [0, 39]];

const mid = (list: number[], i: number) => (list[i] + list[i + 1]) / 2;

const SheetFrame: React.FC = () => (
  <g fill="none">
    <path d="M0 0H567V400H0z" stroke="#00a0a0" strokeWidth="1.500" />
    <path d="M17 57V393.500H513" stroke="#00c0c0" />
    <path d="M3 6.500H513" stroke="#00ffff" />
    <path d="M3.500 6.500V57.500H17M7 7V57M10 7V57M13 7V57M17 6V57M3 15.500H17M3 24H17M3 32.500H17M3 41H17M3 49.500H17" stroke="#ddd" />
    <path d="M5 10V56" stroke="#fff" strokeWidth="2" strokeDasharray="3 2" />
    <path d="M513.500 6.500H560.500V393.500H513.500z" stroke="#bbb" strokeWidth="1.500" />
    <path d={RULES.map((y) => `M513 ${y + 0.5}H560`).join('') + 'M528.500 290V338M544.500 290V338M528.500 366V393'} stroke="#ddd" />
    <path d="M528.500 11.500H544.500V28.500H528.500z" stroke="#999" />
    <path d="M530 13h13v13h-13z" fill="#fff" />
    <path d="M535 16v8M538 15l-2 8" stroke="#333" />
    <g stroke="#fff" strokeWidth="1.800" strokeDasharray="5 1 3 1 7 1">
      <path d="M518 33.500H531M515 36.500H551M515 42H536M517 46.500H535M519 50.500H549M523 54.500H545M515 60.500H523M515 63.500H529M515 84H524M515 87H530M532 93.500H542M515 104.500H523M515 107.500H527M521 114H533M515 119H529M521 124H533M515 129H529M521 134H533M515 139H518M515 255H535M515 261.500H522M523 341.500H532M532 354H542" />
      <path d="M518 294H524M534 294H538M550 294H555M518 301H524M518 307.500H524M534 307.500H537M518 314.500H524M518 321.500H524M518 328H524M534 328H537M518 335H524M534 335H538M518 370H524M542 370H546M518 377H524M541 377H547M518 383.500H524M534 383.500H552M518 390H524M542 390H548" />
      <path d="M465 374.500H473M466 378.500H474M449 365V346M453 365V352" />
    </g>
    <path d="M528 70H544M533 75H540M534 301H538M534 314.500H538M534 321.500H538" stroke="#f00" strokeWidth="2" />
    {/* floor schedule */}
    <path
      d={Array.from({ length: 23 }, (_, i) => `M458 ${267 + i * 4.6}H482`).join('') + 'M458 354.500H496M458 363.500H496M458 368.500H496M464 376H490'}
      stroke="#bbb"
    />
    <path d="M458 262V368M463 262V368M474 262V368M482 262V368M489.500 262V368M496 262V368M450.500 340V364H458M455.500 345V364" stroke="#aaa" />
    <path d="M460.500 264V367M469 264V367M478.500 264V367" stroke="#fff" strokeWidth="4" strokeDasharray="2.600 2" opacity=".85" />
    <path d="M485 316h4M491 316h4M485 359h4M491 359h4" stroke="#fff" strokeWidth="2.500" />
    {/* notes */}
    <path d="M326 328H234" stroke="#7048a8" strokeWidth="2" />
    <path d="M234 327.500H316" stroke="#00ff00" strokeWidth="2" />
    <path d="M239 324H260M308 324.500H312" stroke="#fff" strokeWidth="3" strokeDasharray="3 .6 5 .4" />
    {LEGEND.map(([dx, w], i) => (
      <g key={i}>
        <path d={`M234 ${333.5 + i * 5.2}H326`} stroke={i % 2 ? '#a070e0' : '#7048a8'} strokeWidth="1.300" />
        <path d={`M${235 + dx} ${331.8 + i * 5.2}h${w}`} stroke="#fff" strokeWidth="2.500" strokeDasharray="1 1 6 .6 4 .6" />
      </g>
    ))}
  </g>
);

const HalfPlan: React.FC = () => (
  <g fill="none">
    <path d={SLABS} stroke="#7a8f8f" strokeDasharray="2.500 1.200" strokeWidth="1.300" />
    <path d={WALLS} stroke="#20d800" strokeWidth="2.600" />
    <path d={WALLS} stroke="#6f8c00" strokeDasharray="12 3" />
    <path d="M225 118H234M161 169H175M269 185V200M223 188V196" stroke="#2000a0" strokeWidth="1.500" />
  </g>
);

const Plan: React.FC<{ detailed?: boolean }> = ({ detailed }) => {
  const dash = detailed ? undefined : '14 3 4 3';
  return (
    <g fill="none">
      <path d={TOP_X.map((x) => `M${x}.5 ${detailed ? 98 : 102}V155`).join('')} stroke="#b00000" strokeDasharray={dash} />
      <path d={BOTTOM_X.map((x) => `M${x}.5 110V270`).join('')} stroke="#c00000" strokeDasharray={dash} />
      <path d={[185, 223, 354, 392].map((x) => `M${x}.5 200V270`).join('')} stroke="#ff0000" strokeDasharray={dash} />
      <path d={SIDE_Y.map((y) => `M75 ${y}.5H463`).join('')} stroke="#b00000" strokeDasharray={dash} />
      <path d="M75 118.500H463M75 197.500H463M75 185.500H463" stroke="#ff0000" strokeDasharray={dash} />
      <path d={TOP_X.map((x) => `M${x}.5 78V102`).join('') + BOTTOM_X.map((x) => `M${x}.5 270V292`).join('') + SIDE_Y.map((y) => `M54 ${y}.5H75M447 ${y}.5H467`).join('')} stroke="#00e000" />
      <path d="M100 84.500H439M100 89.500H439M100 281.500H439M100 286.500H439M59.500 118V241M64.500 118V241M457.500 118V241M462.500 118V241" stroke="#00a000" />
      <path d="M102 88.500H438M104 279.500H438M63.500 124V240M456.500 124V240" stroke="#ddd" strokeDasharray="3 9" strokeWidth="1.500" />
      <HalfPlan />
      <g transform="translate(539 0) scale(-1 1)">
        <HalfPlan />
      </g>
      <path d="M112 118.500H258M281 118.500H427" stroke="#c03000" strokeDasharray="9 5" />
      <path d="M161 118V107.500H209V118M330 118V107.500H378V118" stroke="#00b0b0" />
      <g stroke="#00e000">
        {TOP_X.map((x) => <circle key={x} cx={x + 0.5} cy={75.5} r={3} />)}
        {BOTTOM_X.map((x) => <circle key={x} cx={x + 0.5} cy={294.5} r={3} />)}
        {SIDE_Y.map((y, i) => <circle key={y} cx={i === 3 ? 45 : 50.5} cy={y + 0.5} r={3} />)}
        {SIDE_Y.map((y, i) => <circle key={y} cx={i === 3 ? 476 : 470.5} cy={y + 0.5} r={3} />)}
      </g>
      <g stroke="#fff" strokeWidth="1.500">
        <path d={TOP_X.map((x) => `M${x} 75v2`).join('') + BOTTOM_X.map((x) => `M${x} 294v2`).join('') + SIDE_Y.map((y) => `M50 ${y}v2M470 ${y}v2`).join('')} />
      </g>
      <g stroke="#ffff00" strokeWidth="1.300">
        {(detailed ? NOTES_TALL : NOTES_FULL).map(([x, y], i) => (
          <path
            key={i}
            d={detailed ? `M${x + 1} ${y}v12h7M${x + 3} ${y + 1}v10M${x + 5} ${y}v10M${x + 2} ${y + 5}h4M${x + 2} ${y + 8}h4` : `M${x + 0.5} ${y + 10}V${y}h11M${x + 1} ${y + 2}h10M${x + 1} ${y + 3.5}h9M${x + 2} ${y + 5}h6`}
          />
        ))}
        {(detailed ? NOTES_TALL_SMALL : NOTES_FULL_SMALL).map(([x, y], i) => (
          <path key={i} d={detailed ? `M${x} ${y + 6}h5v-6M${x + 2} ${y + 1}v3` : `M${x + 0.5} ${y + 6}v-6h6`} />
        ))}
      </g>
    </g>
  );
};

const PlanLabels: React.FC = () => (
  <g>
    <g fill="none" stroke="#007800">
      {TOP_X.map((x) => <circle key={x} cx={x} cy={75} r={11.5} />)}
      {BOTTOM_X.map((x) => <circle key={x} cx={x} cy={284} r={11.5} />)}
      {SIDE_Y.map((y) => <circle key={y} cx={58} cy={y} r={11.5} />)}
      {SIDE_Y.map((y) => <circle key={y} cx={481} cy={y} r={11.5} />)}
    </g>
    <g className="font-['Noto_Sans',sans-serif] text-[18px]" fill="#fff" textAnchor="middle">
      {TOP_X.map((x, i) => TOP_NO[i] !== '_' && <text key={x} x={x} y={82}>{TOP_NO[i]}</text>)}
      {BOTTOM_X.map((x, i) => <text key={x} x={x} y={290}>{BOTTOM_NO[i]}</text>)}
      {SIDE_Y.map((y, i) => SIDE_NO[i] !== '_' && <text key={y} x={58} y={y + 6}>{SIDE_NO[i]}</text>)}
      {SIDE_Y.map((y, i) => SIDE_NO[i] !== '_' && <text key={y} x={481} y={y + 6}>{SIDE_NO[i]}</text>)}
      {TOP_DIM.map((n, i) => <text key={i} x={mid(TOP_X, i)} y={109}>{n}</text>)}
      {BOTTOM_DIM.map((n, i) => <text key={i} x={mid(BOTTOM_X, i)} y={263}>{n}</text>)}
      {SIDE_DIM.map((n, i) => <text key={i} transform={`translate(92 ${mid(SIDE_Y, i)}) rotate(-90)`}>{n}</text>)}
      {SIDE_DIM.map((n, i) => <text key={i} transform={`translate(461 ${mid(SIDE_Y, i)}) rotate(-90)`}>{n}</text>)}
      <text x={270} y={98}>50200</text>
      <text x={270} y={273}>50200</text>
      <text transform="translate(81 177) rotate(-90)">18300</text>
      <text transform="translate(471 177) rotate(-90)">18300</text>
    </g>
    <path d="M92.500 314V374M435.500 314V374" stroke="#600000" strokeWidth="1.500" />
  </g>
);

const Drawing: React.FC = () => (
  <svg className="block h-full w-full bg-black" role="img" aria-label="CAD">
    <g transform="translate(88 263)">
      <SheetFrame />
      <Plan detailed />
      <PlanLabels />
    </g>
    <g transform="translate(722 263)">
      <SheetFrame />
      <Plan />
    </g>
    <g className="font-['Lato',sans-serif] text-[40px] font-light" fill="#ccc" textAnchor="middle">
      <text x="46" y="482">18</text>
      <text x="680" y="482">19</text>
    </g>
    <path d="M50 792V772" stroke="#00ff00" strokeWidth="3" />
    <path d="M44 776l6-12l5 12z" fill="#00ff00" />
    <path d="M54 793H68" stroke="#ff0000" strokeWidth="3" />
    <path d="M68 788l11 5l-11 5z" fill="#ff0000" />
    <circle cx="50" cy="793" r="5" fill="#0000c0" />
    <g className="font-['Liberation_Sans',sans-serif] text-[15px]">
      <text x="45" y="762" fill="#00ff00">Y</text>
      <text x="80" y="799" fill="#ff0000">X</text>
    </g>
  </svg>
);

const ACTIONS: [string, boolean][] = [
  ['提取边线', false],
  ['提取原位标注', true],
  ['点选识别梁', true],
  ['编辑支座', false],
  ['点选识别原位标注', true],
];

const ActionPanel: React.FC = () => (
  <div className="absolute left-0 top-0 w-[149px] border border-[#2c67a6] bg-[#1c4a80] text-white">
    <div className="flex h-[13px] items-center justify-end border-b border-[#12335a] bg-[#17375c] pr-[3px]">
      <button type="button" aria-label="close actions"><Close className="h-2 w-2" /></button>
    </div>
    <div className="flex flex-col gap-1.5 pb-1 pl-[7px] pr-[5px] pt-1.5">
      {ACTIONS.map(([text, menu]) => (
        <div key={text} className="flex h-[26px] border border-[#163c69] bg-[#205388]">
          <button type="button" className="flex-1">{text}</button>
          {menu && (
            <button type="button" aria-label={`${text} more`} className="grid w-4 place-items-center border-l border-[#163c69]">
              <Caret className="text-white" />
            </button>
          )}
        </div>
      ))}
    </div>
  </div>
);

const ViewBar: React.FC = () => (
  <div className="absolute right-0 top-0 flex w-[30px] flex-col items-center rounded-l-[3px] border-l border-[#ccc] bg-white pb-3.5 pt-[13px]">
    {['orbit', 'cube3d', 'cubetop', 'cubefull', 'corners', 'selcube', 'listeye'].map((name) => (
      <React.Fragment key={name}>
        {name === 'listeye' && <div className="mb-1.5 h-px w-6 bg-[#555]" />}
        <button type="button" aria-label={name} className={name === 'cubetop' || name === 'cubefull' ? 'mb-2' : name === 'listeye' ? '' : name === 'selcube' ? 'mb-[7px]' : 'mb-[9px]'}>
          <Icon name={name} className="h-5 w-5" />
        </button>
        {(name === 'cubetop' || name === 'cubefull') && <Caret className="mb-[7px] text-[#555]" />}
      </React.Fragment>
    ))}
  </div>
);

const Workspace: React.FC = () => (
  <main className="relative min-w-0 flex-1 overflow-hidden bg-black">
    <Drawing />
    <ActionPanel />
    <ViewBar />
    <div className="absolute -right-[30px] top-[413px] h-[46px] w-[46px] rounded-full border-2 border-[#eee] bg-[#3fbf5c] pl-[3px] text-[12px] font-bold leading-[42px] text-white">58</div>
  </main>
);

const SNAPS: [string, string][] = [
  ['ortho', ''],
  ['snaprect', 'menu'],
  ['cross', ''],
  ['angle', 'menu'],
  ['plusbox', 'menu'],
  ['layersel', ''],
  ['arcsel', ''],
];

const StatusBar: React.FC = () => (
  <footer className="flex h-[26px] shrink-0 items-center overflow-hidden whitespace-nowrap bg-[#fcfcfc] pl-0.5 pt-1">
    <div className="flex w-[263px] gap-[5px]">
      <span>X</span><span>=</span><span>106297</span><span>Y</span><span>=</span><span>17056</span>
    </div>
    <span className="w-[83px]">层高： 2.76</span>
    <span className="w-[133px]">标高： -2.92~-0.16</span>
    <span className="w-[103px]">0</span>
    <span className="w-[103px]">隐藏：0</span>
    <div className="flex gap-1 pt-px">
      {SNAPS.map(([icon, menu]) => (
        <button
          key={icon}
          type="button"
          aria-label={icon}
          className={`flex h-6 items-center justify-center gap-1.5 rounded-[2px] border ${menu ? 'w-9' : 'w-[25px]'} ${icon === 'snaprect' ? 'border-[#2a7de1] bg-[#d6e6fb]' : 'border-[#999] bg-white'}`}
        >
          <Icon name={icon} />
          {menu && <Caret className="text-[#555]" />}
        </button>
      ))}
    </div>
    <span className="pl-1.5">按鼠标左键指定第一个角点，或拾取构件图元</span>
  </footer>
);

export default function App() {
  return (
    <div className="flex h-screen flex-col overflow-hidden bg-white font-['Noto_Sans','Noto_Sans_CJK_SC',sans-serif] text-[12px] leading-[18px] text-[#333]">
      <Header />
      <Ribbon />
      <Filters />
      <div className="flex min-h-0 flex-1">
        <NavPanel />
        <div className="ml-1 flex w-[280px] shrink-0 flex-col gap-[3px]">
          <SheetPanel />
          <LayerPanel />
        </div>
        <div className="flex w-1 shrink-0 flex-col bg-white">
          <button type="button" aria-label="toggle panels" className="mt-[372px] h-[100px] w-1 bg-[#5b6475]" />
        </div>
        <Workspace />
      </div>
      <StatusBar />
    </div>
  );
}
